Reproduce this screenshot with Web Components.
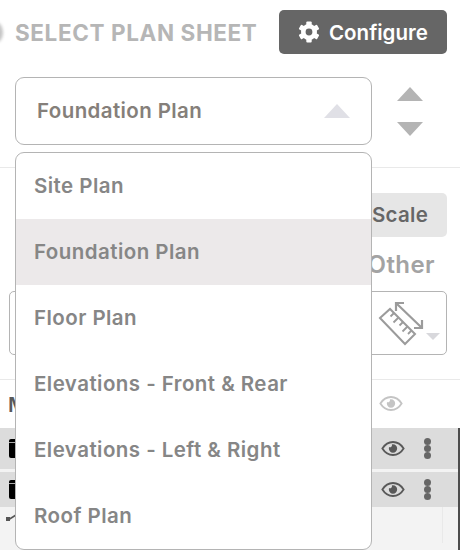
<!DOCTYPE html>
<html>
<head>
<meta charset="utf-8">
<style>
    html, body{ margin: 0; padding: 0; background: #fff; }
    body{ font-family: Inter, "Noto Sans", sans-serif; overflow: hidden; }
</style>
</head>
<body>
<plan-panel>
    <plan-header title-text="SELECT PLAN SHEET" button-text="Configure"></plan-header>
    <plan-select value="Foundation Plan"></plan-select>
    <plan-tools></plan-tools>
    <plan-layers></plan-layers>
    <plan-menu>
        <plan-option>Site Plan</plan-option>
        <plan-option selected>Foundation Plan</plan-option>
        <plan-option>Floor Plan</plan-option>
        <plan-option>Elevations - Front &amp; Rear</plan-option>
        <plan-option>Elevations - Left &amp; Right</plan-option>
        <plan-option>Roof Plan</plan-option>
    </plan-menu>
</plan-panel>
<script>
const EYE_ICON = `
    <svg viewBox="0 0 26 18" width="24" height="17" fill="none">
        <path d="M1.500 9C4.500 4.200 8.500 2 13 2s8.500 2.200 11.500 7C21.500 13.800 17.500 16 13 16S4.500 13.800 1.500 9z" stroke="currentColor" stroke-width="2"/>
        <path d="M13 4.500a4.500 4.500 0 1 1-4.500 4.500c0-.6.1-1.100.3-1.600a2.200 2.200 0 0 0 3-2.700c.4-.1.800-.2 1.200-.2z" fill="currentColor"/>
    </svg>`;

const PlanPanelTemplate = document.createElement('template');
PlanPanelTemplate.innerHTML = `
    <style>
        :host{
            display: block;
            position: relative;
            width: 460px;
            height: 550px;
            overflow: hidden;
        }
    </style>
    <slot></slot>
`;
class PlanPanel extends HTMLElement {
    constructor(){
        super();
        this.attachShadow({mode: 'open'});
        this.shadowRoot.append( PlanPanelTemplate.content.cloneNode(true) );
    }
}
customElements.define('plan-panel', PlanPanel);

const PlanHeaderTemplate = document.createElement('template');
PlanHeaderTemplate.innerHTML = `
    <style>
        :host{
            display: flex;
            align-items: center;
            justify-content: space-between;
            height: 44px;
            padding: 10px 13px 0 15px;
            position: relative;
        }
        .title{
            font-size: 22.500px;
            font-weight: 700;
            color: #b6b6b6;
            letter-spacing: .6px;
            white-space: nowrap;
        }
        .dot{
            position: absolute;
            left: -12px;
            top: 22px;
            width: 15px;
            height: 21px;
            border-radius: 50%;
            background: #c4c4c4;
            filter: blur(1.500px);
        }
        button{
            display: flex;
            align-items: center;
            column-gap: 9px;
            width: 168px;
            height: 44px;
            border: 0;
            border-radius: 5px;
            background: #666;
            color: #fff;
            font: 600 20.500px Inter, "Noto Sans", sans-serif;
            padding: 0 0 0 19px;
        }
    </style>
    <div class="dot"></div>
    <div class="title"></div>
    <button>
        <svg viewBox="-11 -11 22 22" width="22" height="22">
            <circle r="5.700" fill="none" stroke="#fff" stroke-width="4.600"/>
            <g fill="#fff">
                <rect x="-2.700" y="-10.500" width="5.400" height="4.500" rx="1"/>
                <rect x="-2.700" y="-10.500" width="5.400" height="4.500" rx="1" transform="rotate(60)"/>
                <rect x="-2.700" y="-10.500" width="5.400" height="4.500" rx="1" transform="rotate(120)"/>
                <rect x="-2.700" y="-10.500" width="5.400" height="4.500" rx="1" transform="rotate(180)"/>
                <rect x="-2.700" y="-10.500" width="5.400" height="4.500" rx="1" transform="rotate(240)"/>
                <rect x="-2.700" y="-10.500" width="5.400" height="4.500" rx="1" transform="rotate(300)"/>
            </g>
        </svg>
        <span class="label"></span>
    </button>
`;
class PlanHeader extends HTMLElement {
    get titleText(){
        return this.getAttribute('title-text');
    }
    get buttonText(){
        return this.getAttribute('button-text');
    }
    constructor(){
        super();
        this.attachShadow({mode: 'open'});
    }
    connectedCallback(){
        this.shadowRoot.innerHTML = '';
        this.shadowRoot.append( PlanHeaderTemplate.content.cloneNode(true) );
        this.shadowRoot.querySelector('.title').textContent = this.titleText;
        this.shadowRoot.querySelector('.label').textContent = this.buttonText;
    }
}
customElements.define('plan-header', PlanHeader);

const PlanSelectTemplate = document.createElement('template');
PlanSelectTemplate.innerHTML = `
    <style>
        :host{
            display: flex;
            align-items: center;
            column-gap: 25px;
            margin-top: 23px;
            padding: 0 0 22px 15px;
            border-bottom: 1px solid #e9e9e9;
        }
        .box{
            box-sizing: border-box;
            width: 357px;
            height: 68px;
            display: flex;
            align-items: center;
            justify-content: space-between;
            padding: 0 21px;
            border: 1px solid #b4b4b4;
            border-radius: 9px;
            font-size: 20.500px;
            font-weight: 600;
            letter-spacing: .4px;
            color: #857f7a;
        }
        .value{ padding-bottom: 2px; }
        .up{
            width: 0;
            height: 0;
            border-left: 13px solid transparent;
            border-right: 13px solid transparent;
            border-bottom: 14px solid #e0e0e6;
        }
        .stepper{
            display: flex;
            flex-direction: column;
            row-gap: 21px;
        }
        .stepper div{
            width: 0;
            height: 0;
            border-left: 13px solid transparent;
            border-right: 13px solid transparent;
        }
        .stepper .prev{ border-bottom: 14px solid #b4b4b4; }
        .stepper .next{ border-top: 14px solid #b4b4b4; }
    </style>
    <div class="box">
        <span class="value"></span>
        <span class="up"></span>
    </div>
    <div class="stepper">
        <div class="prev"></div>
        <div class="next"></div>
    </div>
`;
class PlanSelect extends HTMLElement {
    get value(){
        return this.getAttribute('value');
    }
    constructor(){
        super();
        this.attachShadow({mode: 'open'});
    }
    connectedCallback(){
        this.shadowRoot.innerHTML = '';
        this.shadowRoot.append( PlanSelectTemplate.content.cloneNode(true) );
        this.shadowRoot.querySelector('.value').textContent = this.value;
    }
}
customElements.define('plan-select', PlanSelect);

const PlanToolsTemplate = document.createElement('template');
PlanToolsTemplate.innerHTML = `
    <style>
        :host{
            display: flex;
            flex-direction: column;
            align-items: flex-end;
            padding: 25px 13px 24px 9px;
            border-bottom: 1px solid #e9e9e9;
        }
        .tab{
            box-sizing: border-box;
            width: 120px;
            height: 44px;
            display: flex;
            align-items: center;
            justify-content: flex-end;
            padding: 0 19px 2px 0;
            background: #e6e6e6;
            border-radius: 5px;
            font-size: 20.500px;
            font-weight: 600;
            letter-spacing: .25px;
            color: #666;
        }
        .other{
            align-self: flex-end;
            margin: 14px 12px 12px 0;
            font-size: 24px;
            line-height: 28px;
            font-weight: 600;
            letter-spacing: .4px;
            color: #a3a3a3;
        }
        .field{
            box-sizing: border-box;
            align-self: stretch;
            height: 64px;
            display: flex;
            align-items: center;
            justify-content: flex-end;
            padding-right: 6px;
            border: 1px solid #b4b4b4;
            border-radius: 5px;
        }
        .caret{
            width: 0;
            height: 0;
            margin: 27px 0 0 2px;
            border-left: 7.500px solid transparent;
            border-right: 7.500px solid transparent;
            border-top: 7px solid #d8d8dc;
        }
    </style>
    <div class="tab">Scale</div>
    <div class="other">Other</div>
    <div class="field">
        <svg viewBox="0 0 46 48" width="46" height="48" fill="none" stroke="#9b9b9b" stroke-width="2">
            <path d="M2 19L12 10 37 35 27 45z"/>
            <path d="M16 14l-3.500 3.500M20.500 18.500l-5 5M25 23l-3.500 3.500M29.500 27.500l-5 5M33.500 31.500l-3.500 3.500" stroke-width="1.800"/>
            <path d="M18 4l26 25M18 12V4h8M44 21v8h-8" stroke-width="2.200"/>
        </svg>
        <div class="caret"></div>
    </div>
`;
class PlanTools extends HTMLElement {
    constructor(){
        super();
        this.attachShadow({mode: 'open'});
        this.shadowRoot.append( PlanToolsTemplate.content.cloneNode(true) );
    }
}
customElements.define('plan-tools', PlanTools);

const PlanLayersTemplate = document.createElement('template');
PlanLayersTemplate.innerHTML = `
    <style>
        :host{
            display: block;
            color: #595959;
        }
        .head{
            display: flex;
            align-items: center;
            height: 48px;
            padding-left: 8px;
            font-size: 20.500px;
            font-weight: 600;
        }
        .head .name{ flex: 1; }
        .head .eye{ color: #c4c4c4; margin: 0 57px 8px 0; height: 17px; }
        .rows{
            display: flex;
            flex-direction: column;
            row-gap: 3px;
            border-right: 2px solid #4d4d4d;
            background: #f3f3f3;
            height: 122px;
        }
        .row{
            display: flex;
            align-items: center;
            background: #dcdcdc;
            padding-left: 9px;
        }
        .row.one{ height: 41px; }
        .row.two{ height: 35px; }
        .row .bar{
            width: 8px;
            height: 19px;
            border-radius: 2px;
            flex-shrink: 0;
            background: linear-gradient(#000 0 3px, #aaa 3px 4px, #000 4px);
        }
        .row .eye{ margin-left: auto; height: 17px; }
        .row .dots{
            display: flex;
            flex-direction: column;
            margin: 0 27px 0 19px;
        }
        .row .dots i{
            width: 7px;
            height: 7px;
            border-radius: 50%;
            background: #666;
        }
        .sub{
            display: flex;
            align-items: center;
            height: 36px;
            margin-top: -3px;
            padding-left: 6px;
        }
        .sub .cell-line{
            align-self: stretch;
            width: 1px;
            margin: 0 15px 0 auto;
            background: #e9e9e9;
        }
    </style>
    <div class="head">
        <span class="name">M</span>
        <span class="eye">${EYE_ICON}</span>
    </div>
    <div class="rows">
        <div class="row one">
            <span class="bar"></span>
            <span class="eye">${EYE_ICON}</span>
            <span class="dots"><i></i><i></i><i></i></span>
        </div>
        <div class="row two">
            <span class="bar"></span>
            <span class="eye">${EYE_ICON}</span>
            <span class="dots"><i></i><i></i><i></i></span>
        </div>
        <div class="sub">
            <svg viewBox="0 0 12 10" width="12" height="10" style="margin-top:-16px"><path d="M2 8l8-5" stroke="#555" stroke-width="1.500"/><rect x="0" y="5" width="4" height="4" fill="#555"/></svg>
            <span class="cell-line"></span>
        </div>
    </div>
`;
class PlanLayers extends HTMLElement {
    constructor(){
        super();
        this.attachShadow({mode: 'open'});
        this.shadowRoot.append( PlanLayersTemplate.content.cloneNode(true) );
    }
}
customElements.define('plan-layers', PlanLayers);

const PlanMenuTemplate = document.createElement('template');
PlanMenuTemplate.innerHTML = `
    <style>
        :host{
            display: block;
            position: absolute;
            left: 15px;
            top: 152px;
            width: 357px;
            box-sizing: border-box;
            border: 1px solid #b4b4b4;
            border-radius: 9px;
            background: #fff;
            overflow: hidden;
        }
    </style>
    <slot></slot>
`;
class PlanMenu extends HTMLElement {
    constructor(){
        super();
        this.attachShadow({mode: 'open'});
        this.shadowRoot.append( PlanMenuTemplate.content.cloneNode(true) );
    }
}
customElements.define('plan-menu', PlanMenu);

const PlanOptionTemplate = document.createElement('template');
PlanOptionTemplate.innerHTML = `
    <style>
        :host{
            display: flex;
            align-items: center;
            box-sizing: border-box;
            height: 66px;
            padding: 0 0 2px 18px;
            font-size: 20.500px;
            font-weight: 600;
            letter-spacing: .45px;
            color: #868686;
        }
        :host([selected]){
            background: #ece9ea;
        }
    </style>
    <slot></slot>
`;
class PlanOption extends HTMLElement {
    constructor(){
        super();
        this.attachShadow({mode: 'open'});
        this.shadowRoot.append( PlanOptionTemplate.content.cloneNode(true) );
    }
}
customElements.define('plan-option', PlanOption);
</script>
</body>
</html>
